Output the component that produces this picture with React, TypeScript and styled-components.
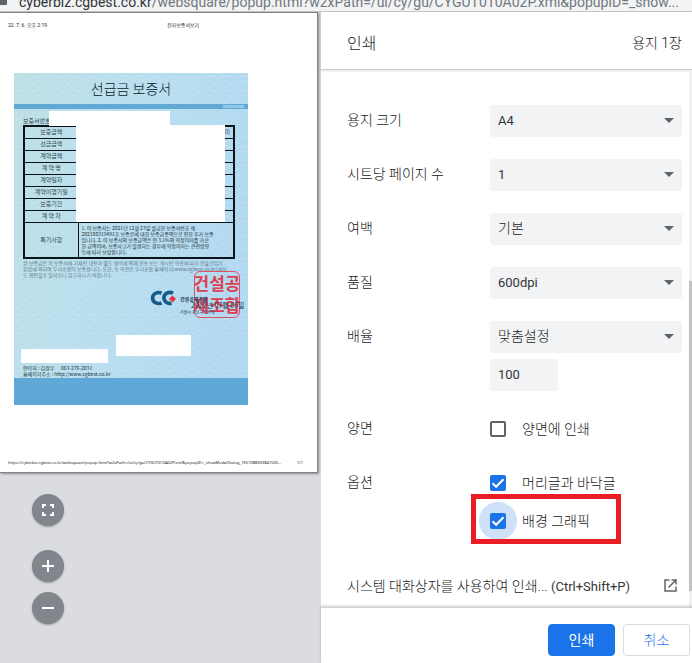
import React from "react";
import styled, { createGlobalStyle } from "styled-components";

const GlobalStyle = createGlobalStyle`
  * { box-sizing: border-box; }
  body {
    margin: 0;
    background: #fff;
    color: #17181a;
    font-family: Roboto, "Noto Sans CJK KR", sans-serif;
    font-size: 14px;
  }
  button, input, select { font: inherit; color: inherit; }
`;

const Window = styled.div`
  display: flex;
  flex-direction: column;
  min-height: 100vh;
  overflow: hidden;
`;

/* ---------- address bar ---------- */

const AddressBar = styled.header`
  display: flex;
  align-items: flex-end;
  gap: 12px;
  height: 12px;
  overflow: hidden;
  background: #f1f3f4;
  border-bottom: 1px solid #c3c5c8;
`;

const LockBody = styled.svg`
  flex: none;
  align-self: flex-start;
`;

const Address = styled.div`
  flex: 1;
  min-width: 0;
  height: 20px;
  line-height: 22px;
  font-size: 14px;
  white-space: nowrap;
  color: #73777b;
`;

const Host = styled.span`
  color: #303336;
`;

const Main = styled.main`
  display: flex;
  flex: 1;
`;

/* ---------- preview ---------- */

const Preview = styled.section`
  flex: 1;
  min-width: 0;
  background: #dadce0;
`;

const Sheet = styled.article`
  display: flex;
  flex-direction: column;
  height: 461px;
  margin-right: 3px;
  padding: 9px 14px 6px 8px;
  background: #fff;
  border: solid #808286;
  border-width: 1px 1px 1px 0;
  box-shadow: 1px 1px 2px #8a8c90;
`;

const SheetHead = styled.div`
  display: flex;
  gap: 120px;
  font-size: 5px;
  line-height: 6px;
  white-space: nowrap;
  color: #222;
`;

const SheetFoot = styled(SheetHead)`
  gap: 6px;
  justify-content: space-between;
  font-family: "Noto Sans", sans-serif;
  font-size: 4px;
`;

const Certificate = styled.div`
  position: relative;
  display: flex;
  flex-direction: column;
  width: 234px;
  height: 332px;
  margin: 45px 0 auto 6px;
  background:
    repeating-radial-gradient(circle at 8px 14px, #ffffff14 0 2px, #ffffff00 2px 5px) 0 0 / 17px 14px,
    linear-gradient(100deg, #bddfe4 0%, #b9dfee 35%, #b1d7f2 100%);
  font-family: "Noto Sans CJK KR", sans-serif;
  color: #34454f;
`;

const CertTitle = styled.h1`
  margin: 0;
  height: 31px;
  font-size: 14px;
  font-weight: 300;
  line-height: 31px;
  text-align: center;
  color: #0c1a24;
`;

const Stripe = styled.div`
  display: flex;
  justify-content: flex-end;
  height: 5px;
  padding: 1px 4px;
  background: #61a8d4;
`;

const StripeMark = styled.span`
  width: 21px;
  background: #8fc5e6;
`;

const CertBody = styled.div`
  flex: 1;
  padding: 8px 4px 0 9px;
`;

const CertNumber = styled.div`
  font-size: 6px;
  line-height: 8px;
`;

const CertTable = styled.table`
  width: 212px;
  border: 2px solid #0c1418;
  border-collapse: collapse;
  table-layout: fixed;
  font-size: 6px;
  line-height: 6px;

  th, td {
    height: 12px;
    padding: 0;
    border: 1px solid #0c1418;
    font-weight: 400;
  }
  th { width: 54px; }
  td {
    padding-right: 3px;
    text-align: right;
  }
  tr:last-child > * { height: 36px; }
  tr:last-child td {
    padding: 0 0 0 3px;
    font-size: 5px;
    text-align: left;
    color: #1f2e38;
    white-space: nowrap;
  }
`;

const Disclaimer = styled.p`
  margin: 1px 0 0;
  font-size: 5px;
  line-height: 6px;
  white-space: nowrap;
  color: #5b7888;
`;

const Contact = styled.div`
  padding: 0 9px;
  font-size: 5px;
  line-height: 6px;
  color: #22323c;
`;

const CertFoot = styled.div`
  height: 27px;
  margin-top: 1px;
  background: #60a8d8;
`;

const Cover = styled.span<{ $x: number; $y: number; $w: number; $h: number }>`
  position: absolute;
  left: ${(p) => p.$x}px;
  top: ${(p) => p.$y}px;
  width: ${(p) => p.$w}px;
  height: ${(p) => p.$h}px;
  background: #fff;
`;

const Issuer = styled.div`
  position: absolute;
  left: 135px;
  top: 217px;
  display: flex;
  gap: 4px;
`;

const IssuerText = styled.div`
  display: flex;
  flex-direction: column;
  padding-top: 5px;
  font-size: 5px;
  line-height: 7px;
  white-space: nowrap;
  color: #183b58;
`;

const IssuerName = styled.strong`
  font-weight: 700;
`;

const IssueDate = styled.span`
  padding-left: 11px;
  font-size: 7px;
`;

const IssuerNote = styled.span`
  font-size: 4px;
`;

const Seal = styled.div`
  position: absolute;
  left: 180px;
  top: 198px;
  width: 46px;
  height: 47px;
  border: 1px solid #e0505e;
  border-radius: 6px;
  font-size: 17px;
  font-weight: 700;
  line-height: 22px;
  text-align: center;
  white-space: nowrap;
  color: #dc3f50;
`;

const SealLine = styled.span`
  display: block;
  margin: 0 -2px;
`;

const ZoomTools = styled.div`
  display: flex;
  flex-direction: column;
  width: 32px;
  margin: 21px 0 0 32px;
  gap: 10px;
`;

const RoundButton = styled.button<{ $spaced?: boolean }>`
  display: grid;
  place-items: center;
  width: 32px;
  height: 32px;
  margin-bottom: ${(p) => (p.$spaced ? 14 : 0)}px;
  padding: 0;
  border: 0;
  border-radius: 50%;
  background: #80868b;
  box-shadow: 0 1px 2px #0000004d;
  color: #fff;
`;

/* ---------- settings ---------- */

const Sidebar = styled.section`
  display: flex;
  flex-direction: column;
  width: 371px;
  background: #fff;
`;

const SidebarHeader = styled.header`
  display: flex;
  align-items: center;
  justify-content: space-between;
  height: 58px;
  padding: 2px 10px 0 26px;
  border-bottom: 1px solid #cfd0d2;
  box-shadow: 0 1px 2px #0000001f;
`;

const Title = styled.h2`
  margin: 0;
  font-size: 16px;
  font-weight: 300;
`;

const SheetCount = styled.span`
  font-weight: 300;
`;

const Scroller = styled.div`
  display: flex;
  flex: 1;
`;

const Settings = styled.form`
  display: flex;
  flex: 1;
  flex-direction: column;
  gap: 22px;
  padding: 35px 7px 5px 26px;
`;

const Row = styled.div`
  display: grid;
  grid-template-columns: 143px 1fr;
  align-items: start;
`;

const RowLabel = styled.label`
  line-height: 30px;
  font-weight: 300;
`;

const Controls = styled.div`
  display: flex;
  flex-direction: column;
  gap: 6px;
`;

const SelectBox = styled.div`
  position: relative;

  svg {
    position: absolute;
    right: 8px;
    top: 13px;
    pointer-events: none;
  }
`;

const Select = styled.select<{ $latin?: boolean }>`
  display: block;
  width: 100%;
  height: 32px;
  padding: 0 24px 2px 8px;
  border: 0;
  border-radius: 4px;
  appearance: none;
  background: #f1f3f4;
  color: ${(p) => (p.$latin ? "#333539" : "#17181a")};
  font-size: ${(p) => (p.$latin ? 13 : 14)}px;
  font-weight: ${(p) => (p.$latin ? 400 : 300)};
`;

const NumberField = styled.input`
  width: 68px;
  height: 32px;
  padding: 0 8px 2px;
  border: 0;
  border-radius: 4px;
  background: #f1f3f4;
  color: #333539;
  font-size: 13px;
`;

const CheckLabel = styled.label`
  position: relative;
  display: flex;
  align-items: center;
  gap: 16px;
  height: 32px;
  font-weight: 300;
`;

const CheckText = styled.span`
  padding-bottom: 2px;
`;

const CheckMark = styled.span<{ $focus?: boolean }>`
  display: grid;
  width: 16px;
  height: 16px;
  border-radius: 50%;
  background: #cfe0f9;
  box-shadow: 0 0 0 ${(p) => (p.$focus ? 11 : 0)}px #cfe0f9;

  > * { grid-area: 1 / 1; }
  svg { pointer-events: none; }
`;

const CheckInput = styled.input`
  width: 16px;
  height: 16px;
  margin: 0;
  appearance: none;
  border: 2px solid #5f6368;
  border-radius: 2px;
  background: #fff;
  outline: none;

  &:checked {
    border-color: #1a73e8;
    background: #1a73e8;
  }
  &:not(:checked) + svg { visibility: hidden; }
`;

const Highlight = styled.span`
  position: absolute;
  left: -19px;
  top: -11px;
  width: 150px;
  height: 50px;
  border: 5px solid #ea1c24;
  pointer-events: none;
`;

const SystemLink = styled.a`
  display: flex;
  align-items: center;
  justify-content: space-between;
  height: 32px;
  margin-top: 10px;
  padding-right: 5px;
  color: inherit;
  font-weight: 300;
  text-decoration: none;
`;

const Shortcut = styled.span`
  color: #333539;
  font-size: 13px;
  font-weight: 400;
`;

const ScrollTrack = styled.div`
  width: 3px;
  padding-top: 211px;
  background: #f1f1f1;
`;

const ScrollThumb = styled.div`
  height: 310px;
  background: #c1c1c1;
`;

const Actions = styled.footer`
  display: flex;
  align-items: center;
  justify-content: flex-end;
  gap: 8px;
  height: 56px;
  padding: 9px 2px 0 0;
  border-top: 1px solid #d0d1d3;
  box-shadow: 0 -1px 3px #00000033;
`;

const ActionButton = styled.button<{ $primary?: boolean }>`
  width: 67px;
  height: 32px;
  padding: 0 0 2px;
  border: 1px solid ${(p) => (p.$primary ? "#1a73e8" : "#dadce0")};
  border-radius: 4px;
  background: ${(p) => (p.$primary ? "#1a73e8" : "#fff")};
  color: ${(p) => (p.$primary ? "#fff" : "#1a73e8")};
  font-weight: ${(p) => (p.$primary ? 400 : 300)};
`;

const certRows = [
  "보증금액", "선급금액", "계약금액", "계 약 명", "계약일자", "계약이행기일", "보증기간", "계 약 자",
];

const selects = [
  { id: "paper", label: "용지 크기", value: "A4", latin: true },
  { id: "pages", label: "시트당 페이지 수", value: "1", latin: true },
  { id: "margin", label: "여백", value: "기본", latin: false },
  { id: "quality", label: "품질", value: "600dpi", latin: true },
];

function DropDown({ id, value, latin }: { id: string; value: string; latin: boolean }) {
  return (
    <SelectBox>
      <Select id={id} $latin={latin} defaultValue={value}>
        <option>{value}</option>
      </Select>
      <svg width="10" height="5" viewBox="0 0 10 5" aria-hidden="true">
        <path d="M0 0h10L5 5z" fill="#5f6368" />
      </svg>
    </SelectBox>
  );
}

function CheckBox({ text, checked, focus }: { text: string; checked?: boolean; focus?: boolean }) {
  return (
    <CheckLabel>
      <CheckMark $focus={focus}>
        <CheckInput type="checkbox" defaultChecked={checked} />
        <svg width="16" height="16" viewBox="0 0 16 16" aria-hidden="true">
          <path d="M2.5 8.2l3.6 3.6 7.4-7.6" fill="none" stroke="#fff" strokeWidth="2" />
        </svg>
      </CheckMark>
      <CheckText>{text}</CheckText>
      {focus && <Highlight />}
    </CheckLabel>
  );
}

function CertificateView() {
  return (
    <Certificate>
      <CertTitle>선급금 보증서</CertTitle>
      <Stripe><StripeMark /></Stripe>
      <CertBody>
        <CertNumber>보증서번호</CertNumber>
        <CertTable>
          <tbody>
            {certRows.map((name, i) => (
              <tr key={name}>
                <th scope="row">{name}</th>
                <td>{i === 0 ? "00)" : ""}</td>
              </tr>
            ))}
            <tr>
              <th scope="row">특기사항</th>
              <td>
                1. 이 보증서는 2021년 12월 23일 발급한 보증서번호 제<br />
                202100319491호 보증문에 대한 보증금증액으로 인한 추가 보증<br />
                입니다. 2. 이 보증서의 보증금액은 연 3.1%의 약정이자를 가산<br />
                한 금액이며, 보증사고가 발생하는 경우에 약정이자는 관련법령<br />
                등에 따라 보상합니다.
              </td>
            </tr>
          </tbody>
        </CertTable>
        <Disclaimer>
          위 보증금은 이 보증서에 기재된 내용과 별도 협약에 의해 전송 또는 게시된 약관에 따라 건설산업기<br />
          본법에 의하여 우리조합이 보증합니다. 또한, 동 약관은 우리조합 홈페이지(www.cgbest.co.kr)에서<br />
          도 확인할수 있사오니 참고하시기 바랍니다.
        </Disclaimer>
      </CertBody>
      <Contact>
        연락처 : 김경우 &nbsp; &nbsp; &nbsp;063-276-2031<br />
        홈페이지주소 : http://www.cgbest.co.kr
      </Contact>
      <CertFoot />
      <Seal>
        <SealLine>건설공</SealLine>
        <SealLine>제조합</SealLine>
      </Seal>
      <Issuer>
        <svg width="27" height="16" viewBox="0 0 27 16" aria-hidden="true">
          <g fill="none" stroke="#155a88" strokeWidth="3.6">
            <path d="M12.500 3.200A6 5.500 0 1 0 12.500 12.800" />
            <path d="M24 3.200A6 5.500 0 1 0 22.500 13.200" />
          </g>
          <path d="M23.500 5.500l3.500 3.500-3.500 3.500L20 9z" fill="#e23645" />
        </svg>
        <IssuerText>
          <IssuerName>건설공제조합</IssuerName>
          <IssueDate>2022년 07월 06일</IssueDate>
          <IssuerNote>서울시 강남구 언주로</IssuerNote>
        </IssuerText>
      </Issuer>
      <Cover $x={35} $y={38} $w={121} $h={15} />
      <Cover $x={62} $y={52} $w={149} $h={97} />
      <Cover $x={102} $y={262} $w={75} $h={21} />
      <Cover $x={7} $y={276} $w={87} $h={14} />
    </Certificate>
  );
}

export default function App() {
  return (
    <>
      <GlobalStyle />
      <Window>
        <AddressBar>
          <LockBody width="7" height="5" viewBox="0 0 7 5" aria-hidden="true">
            <path d="M0 0h7v4q0 1-1 1H0z" fill="#5f6368" />
          </LockBody>
          <Address>
            <Host>cyberbiz.cgbest.co.kr</Host>
            /websquare/popup.html?w2xPath=/ui/cy/gu/CYGUT010A02P.xml&amp;popupID=_show...
          </Address>
        </AddressBar>
        <Main>
          <Preview>
            <Sheet>
              <SheetHead>
                <span>22. 7. 6. 오후 2:19</span>
                <span>전자보증서보기</span>
              </SheetHead>
              <CertificateView />
              <SheetFoot>
                <span>
                  https://cyberbiz.cgbest.co.kr/websquare/popup.html?w2xPath=/ui/cy/gu/CYGUT010A02P.xml&amp;popupID=_showModalDialog_1657088303841500...
                </span>
                <span>1/1</span>
              </SheetFoot>
            </Sheet>
            <ZoomTools>
              <RoundButton type="button" aria-label="페이지에 맞추기" $spaced>
                <svg width="12" height="12" viewBox="0 0 12 12" aria-hidden="true">
                  <path d="M1 4V1h3M8 1h3v3M11 8v3H8M4 11H1V8" fill="none" stroke="#fff" strokeWidth="2" />
                </svg>
              </RoundButton>
              <RoundButton type="button" aria-label="확대">
                <svg width="12" height="12" viewBox="0 0 12 12" aria-hidden="true">
                  <path d="M0 6h12M6 0v12" stroke="#fff" strokeWidth="2" />
                </svg>
              </RoundButton>
              <RoundButton type="button" aria-label="축소">
                <svg width="12" height="12" viewBox="0 0 12 12" aria-hidden="true">
                  <path d="M0 6h12" stroke="#fff" strokeWidth="2" />
                </svg>
              </RoundButton>
            </ZoomTools>
          </Preview>
          <Sidebar>
            <SidebarHeader>
              <Title>인쇄</Title>
              <SheetCount>용지 1장</SheetCount>
            </SidebarHeader>
            <Scroller>
              <Settings>
                {selects.map((s) => (
                  <Row key={s.id}>
                    <RowLabel htmlFor={s.id}>{s.label}</RowLabel>
                    <DropDown id={s.id} value={s.value} latin={s.latin} />
                  </Row>
                ))}
                <Row>
                  <RowLabel htmlFor="scale">배율</RowLabel>
                  <Controls>
                    <DropDown id="scale" value="맞춤설정" latin={false} />
                    <NumberField type="text" inputMode="numeric" aria-label="배율 값" defaultValue="100" />
                  </Controls>
                </Row>
                <Row>
                  <RowLabel as="span">양면</RowLabel>
                  <CheckBox text="양면에 인쇄" />
                </Row>
                <Row>
                  <RowLabel as="span">옵션</RowLabel>
                  <Controls>
                    <CheckBox text="머리글과 바닥글" checked />
                    <CheckBox text="배경 그래픽" checked focus />
                  </Controls>
                </Row>
                <SystemLink href="#system">
                  <span>시스템 대화상자를 사용하여 인쇄... <Shortcut>(Ctrl+Shift+P)</Shortcut></span>
                  <svg width="13" height="13" viewBox="0 0 13 13" aria-hidden="true">
                    <path d="M5.500 1H1v11h11V7.500M7.500 1H12v4.500M12 1L4.500 8.500" fill="none" stroke="#5f6368" strokeWidth="1.500" />
                  </svg>
                </SystemLink>
              </Settings>
              <ScrollTrack><ScrollThumb /></ScrollTrack>
            </Scroller>
            <Actions>
              <ActionButton type="button" $primary>인쇄</ActionButton>
              <ActionButton type="button">취소</ActionButton>
            </Actions>
          </Sidebar>
        </Main>
      </Window>
    </>
  );
}
